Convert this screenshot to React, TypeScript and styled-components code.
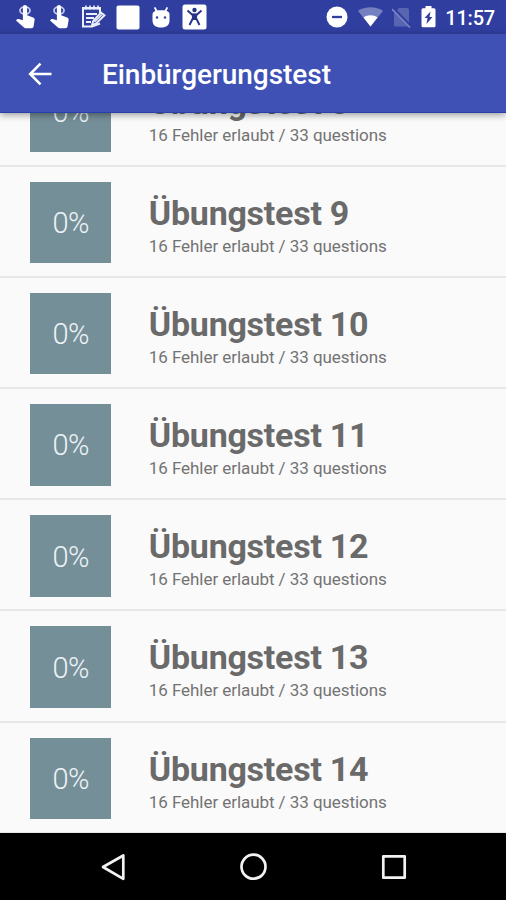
import React from 'react';
import styled, { createGlobalStyle } from 'styled-components';

const GlobalStyle = createGlobalStyle`
  *, *::before, *::after { box-sizing: border-box; }
  body { margin: 0; background: #fafafa; font-family: Roboto, "Liberation Sans", sans-serif; }
`;

const Screen = styled.div`
  display: flex;
  flex-direction: column;
  width: 506px;
  height: 900px;
  overflow: hidden;
  background: #fafafa;
`;

const StatusBar = styled.header`
  display: flex;
  align-items: center;
  justify-content: space-between;
  flex: none;
  height: 34px;
  padding: 0 11px 0 15px;
  background: #303f9f;
  color: #fff;
`;

const StatusGroup = styled.div<{ $gap: number }>`
  display: flex;
  align-items: center;
  gap: ${({ $gap }) => $gap}px;
`;

const Clock = styled.span`
  font-size: 20px;
  font-weight: 500;
  line-height: 34px;
  letter-spacing: -0.2px;
  padding-top: 2px;
`;

const AppBar = styled.div`
  display: flex;
  align-items: center;
  flex: none;
  height: 79px;
  padding: 0 0 0 27px;
  gap: 49px;
  background: #3f51b5;
  border-bottom: 1px solid #2740ae;
  box-shadow: 0 2px 7px rgba(0, 0, 0, 0.38);
  z-index: 1;
  color: #fff;
`;

const BackButton = styled.button`
  display: flex;
  padding: 1px 0 0;
  border: 0;
  background: none;
  color: inherit;
`;

const AppTitle = styled.h1`
  margin: 0;
  font-size: 28px;
  font-weight: 500;
  line-height: 32px;
  letter-spacing: -0.05px;
  padding-top: 4px;
`;

const ListViewport = styled.main`
  flex: 1;
  min-height: 0;
  overflow: hidden;
`;

const List = styled.ul`
  list-style: none;
  margin: -57px 0 0;
  padding: 0;
`;

const Row = styled.li`
  display: flex;
  height: 111.1px;
  padding: 15px 0 0 30px;
  gap: 37.5px;
  border-bottom: 2px solid #e7e7e7;
`;

const Score = styled.div`
  display: flex;
  align-items: center;
  justify-content: center;
  width: 81.3px;
  height: 81.3px;
  padding-top: 1px;
  background: #758f99;
  color: #eef3f5;
  font-size: 29px;
  font-weight: 300;
  letter-spacing: -0.6px;
`;

const RowText = styled.div`
  display: flex;
  flex-direction: column;
  padding-top: 10px;
`;

const TestName = styled.span`
  font-size: 34px;
  font-weight: 700;
  line-height: 42px;
  letter-spacing: -0.25px;
  color: #6a6a6a;
`;

const TestInfo = styled.span`
  font-size: 17px;
  line-height: 24px;
  letter-spacing: -0.06px;
  color: #737373;
`;

const NavBar = styled.nav`
  display: flex;
  align-items: center;
  justify-content: space-between;
  flex: none;
  height: 67px;
  padding: 0 99px 0 99px;
  background: #000;
  color: #f2f2f2;
`;

const TouchIcon = () => (
  <svg width="21" height="26" viewBox="0 0 21 26">
    <ellipse cx="10" cy="6.500" rx="5" ry="3.700" fill="none" stroke="#c3caf0" strokeWidth="1.800" />
    <path d="M7.900 3.200a2 2 0 0 1 4.200 0v8.100l6 2.300c1.200.5 1.700 1.200 1.500 2.400l-1 6.200c-.2 1.300-1 2-2.200 2h-5.600c-.9 0-1.500-.3-2.100-.9L1 16.500l.9-1c.5-.5 1.100-.6 1.800-.4l4.200 1.200z" fill="#fff" />
  </svg>
);

const NoteIcon = () => (
  <svg width="26" height="24" viewBox="0 0 26 24" fill="none" stroke="#eceffc">
    <path d="M20 8V3H3v18.500h9l8-3" strokeWidth="2" />
    <path d="M3 3.500h17M6 9h11M6 13h8M6 17h5" strokeWidth="2" />
    <path d="M6 .5v4M10 .5v4M14 .5v4M18 .5v4" strokeWidth="1.600" />
    <path d="M12 20l1.200-4L21 7.500l3.500 2.800-8.600 8.400z" fill="#303f9f" strokeWidth="1.900" />
    <path d="M14.500 17l7.500-7.500" strokeWidth="1.400" />
  </svg>
);

const SquareIcon = () => (
  <svg width="24" height="25" viewBox="0 0 24 25">
    <rect x=".5" y=".5" width="23" height="24" rx="2" fill="#fff" />
  </svg>
);

const DroidIcon = () => (
  <svg width="20" height="23" viewBox="0 0 20 23">
    <path d="M4 2l2 4M16 2l-2 4" stroke="#fff" strokeWidth="1.700" strokeLinecap="round" />
    <path d="M1.500 8.500c0-2.500 2-4.200 8.500-4.200s8.500 1.700 8.500 4.200v6c0 4.500-3 7-8.500 7s-8.500-2.500-8.500-7z" fill="#fff" />
    <circle cx="6" cy="11.500" r="1.200" fill="#303f9f" />
    <circle cx="14" cy="11.500" r="1.200" fill="#303f9f" />
  </svg>
);

const PersonIcon = () => (
  <svg width="25" height="26" viewBox="0 0 25 26">
    <rect x=".5" y=".5" width="24" height="25" rx="2.500" fill="#fff" />
    <circle cx="12.500" cy="6" r="2.200" fill="#27338b" />
    <path d="M5.500 6.500l4.500 4h5l4.500-4M7.500 21l3-6h4l3 6" fill="none" stroke="#27338b" strokeWidth="1.900" />
    <path d="M9.700 9.700h5.600l-.5 6.300h-4.600z" fill="#27338b" />
  </svg>
);

const DoNotDisturbIcon = () => (
  <svg width="22" height="22" viewBox="0 0 22 22">
    <circle cx="11" cy="11" r="10.500" fill="#fff" />
    <path d="M6 11h10" stroke="#303f9f" strokeWidth="2.300" />
  </svg>
);

const WifiIcon = () => (
  <svg width="25" height="20" viewBox="0 0 25 20">
    <path d="M0 4C7-1 18-1 25 4L12.500 19.500z" fill="#7480c0" />
    <path d="M5.500 10.500c4-3 10-3 14 0l-7 9z" fill="#fff" />
  </svg>
);

const NoSimIcon = () => (
  <svg width="19" height="21" viewBox="0 0 19 21">
    <path d="M7 1h8.500q1.500 0 1.500 1.500V18q0 1.500-1.500 1.500h-12Q2 19.500 2 18V6z" fill="#5965b1" />
    <path d="M1.500 1.500l17 17.500" stroke="#303f9f" strokeWidth="2.600" />
    <path d="M0 2l18 18.500" stroke="#7883c4" strokeWidth="1.700" />
  </svg>
);

const BatteryIcon = () => (
  <svg width="15" height="22" viewBox="0 0 15 22">
    <path d="M4.500 0h6v2.200H13q1.500 0 1.500 1.500v16q0 1.500-1.500 1.500H2Q.5 21.200.5 19.700v-16q0-1.500 1.500-1.500h2.500z" fill="#fff" />
    <path d="M9.500 5.500L3.500 12h3l-1 6 6-7h-3z" fill="#303f9f" />
  </svg>
);

const BackArrow = () => (
  <svg width="26" height="24" viewBox="0 0 26 24" fill="none" stroke="currentColor" strokeWidth="2.600">
    <path d="M24.500 12H3.500M13.500 1.700L3.200 12l10.300 10.300" />
  </svg>
);

const NavBack = () => (
  <svg width="28" height="30" viewBox="0 0 28 30" fill="none" stroke="currentColor" strokeWidth="2.700" strokeLinejoin="round">
    <path d="M24.300 3.500v23.300L4 15z" />
  </svg>
);

const NavHome = () => (
  <svg width="28" height="28" viewBox="0 0 28 28" fill="none" stroke="currentColor" strokeWidth="2.700">
    <circle cx="13.500" cy="13.700" r="12" />
  </svg>
);

const NavRecent = () => (
  <svg width="26" height="26" viewBox="0 0 26 26" fill="none" stroke="currentColor" strokeWidth="2.700" strokeLinejoin="round">
    <rect x="2.300" y="2.300" width="21.400" height="21.400" />
  </svg>
);

const tests = [8, 9, 10, 11, 12, 13, 14];

export default function App() {
  return (
    <Screen>
      <GlobalStyle />
      <StatusBar>
        <StatusGroup $gap={10}>
          <StatusGroup $gap={12.5}>
            <TouchIcon />
            <TouchIcon />
          </StatusGroup>
          <NoteIcon />
          <StatusGroup $gap={11}>
            <SquareIcon />
            <DroidIcon />
            <PersonIcon />
          </StatusGroup>
        </StatusGroup>
        <StatusGroup $gap={9.5}>
          <DoNotDisturbIcon />
          <WifiIcon />
          <NoSimIcon />
          <BatteryIcon />
          <Clock>11:57</Clock>
        </StatusGroup>
      </StatusBar>
      <AppBar>
        <BackButton aria-label="Back"><BackArrow /></BackButton>
        <AppTitle>Einbürgerungstest</AppTitle>
      </AppBar>
      <ListViewport>
        <List>
          {tests.map((number) => (
            <Row key={number}>
              <Score>0%</Score>
              <RowText>
                <TestName>Übungstest {number}</TestName>
                <TestInfo>16 Fehler erlaubt / 33 questions</TestInfo>
              </RowText>
            </Row>
          ))}
        </List>
      </ListViewport>
      <NavBar>
        <NavBack />
        <NavHome />
        <NavRecent />
      </NavBar>
    </Screen>
  );
}
